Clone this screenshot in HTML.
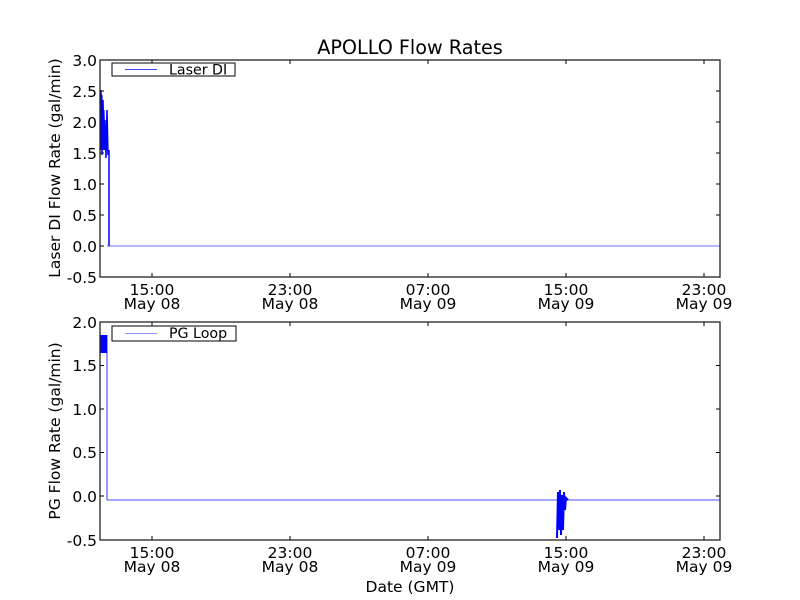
<!DOCTYPE html>
<html><head><meta charset="utf-8"><style>html,body{margin:0;padding:0;background:#fff}svg{display:block}text{font-family:"DejaVu Sans","Liberation Sans",sans-serif;fill:#000}</style></head><body>
<svg width="800" height="600" viewBox="0 0 800 600" xmlns="http://www.w3.org/2000/svg">
<rect width="800" height="600" fill="#fff"/>
<text x="410" y="54" font-size="19.2" text-anchor="middle">APOLLO Flow Rates</text>
<g stroke="#000" stroke-width="1" fill="none">
<path d="M152 60v4M290 60v4M428 60v4M566 60v4M704 60v4M152 277v-4M290 277v-4M428 277v-4M566 277v-4M704 277v-4"/>
<path d="M100 91h4M100 122h4M100 153h4M100 184h4M100 215h4M100 246h4M720 91h-4M720 122h-4M720 153h-4M720 184h-4M720 215h-4M720 246h-4"/>
</g>
<path d="M107 246H720" stroke="#7070ff" stroke-width="1"/>
<path d="M101 90L102 155L103 100L104 150L105 120L106 158L107 110L108 155L109 150L109 246" stroke="#0000ff" stroke-width="1.5" fill="none"/>
<path d="M101 95L102 150L103 110L104 145L105 125L106 150" stroke="#0000ff" stroke-width="3" fill="none"/>
<rect x="100" y="60" width="620" height="217" fill="none" stroke="#222" stroke-width="1.3"/>
<rect x="112" y="63" width="123" height="13" fill="#fff" stroke="#000" stroke-width="1"/>
<line x1="125" y1="69.5" x2="157" y2="69.5" stroke="#4040ff"/>
<text x="169" y="74.5" font-size="14.2">Laser DI</text>
<g font-size="15.5" text-anchor="end">
<text x="97" y="66">3.0</text><text x="97" y="97">2.5</text><text x="97" y="128">2.0</text><text x="97" y="159">1.5</text><text x="97" y="190">1.0</text><text x="97" y="221">0.5</text><text x="97" y="252">0.0</text><text x="97" y="283">-0.5</text>
</g>
<g font-size="15.5" text-anchor="middle">
<text x="152" y="295">15:00</text><text x="152" y="309">May 08</text>
<text x="290" y="295">23:00</text><text x="290" y="309">May 08</text>
<text x="428" y="295">07:00</text><text x="428" y="309">May 09</text>
<text x="566" y="295">15:00</text><text x="566" y="309">May 09</text>
<text x="704" y="295">23:00</text><text x="704" y="309">May 09</text>
</g>
<text transform="translate(60,168) rotate(-90)" font-size="15.5" text-anchor="middle">Laser DI Flow Rate (gal/min)</text>
<g stroke="#000" stroke-width="1" fill="none">
<path d="M152 322v4M290 322v4M428 322v4M566 322v4M704 322v4M152 540v-4M290 540v-4M428 540v-4M566 540v-4M704 540v-4"/>
<path d="M100 365.5h4M100 409h4M100 452.5h4M100 496h4M720 365.5h-4M720 409h-4M720 452.5h-4M720 496h-4"/>
</g>
<path d="M107 500H720" stroke="#7070ff" stroke-width="1.2"/>
<path d="M107 335V500" stroke="#3030ff" stroke-width="1"/>
<rect x="100" y="335" width="7" height="18" fill="#0000ff"/>
<path d="M557 538L558 492L559 520L560 490L561 535L562 495L563 530L564 492L565 510L566 498L568 500" stroke="#0000ff" stroke-width="2" fill="none"/>
<rect x="557" y="495" width="6" height="35" fill="#0000ff"/>
<rect x="100" y="322" width="620" height="218" fill="none" stroke="#222" stroke-width="1.3"/>
<rect x="112" y="326" width="124" height="15" fill="#fff" stroke="#000" stroke-width="1"/>
<line x1="125" y1="333.5" x2="157" y2="333.5" stroke="#9090ff"/>
<text x="169" y="338" font-size="14.2">PG Loop</text>
<g font-size="15.5" text-anchor="end">
<text x="97" y="328">2.0</text><text x="97" y="371">1.5</text><text x="97" y="415">1.0</text><text x="97" y="458">0.5</text><text x="97" y="502">0.0</text><text x="97" y="546">-0.5</text>
</g>
<g font-size="15.5" text-anchor="middle">
<text x="152" y="558">15:00</text><text x="152" y="572">May 08</text>
<text x="290" y="558">23:00</text><text x="290" y="572">May 08</text>
<text x="428" y="558">07:00</text><text x="428" y="572">May 09</text>
<text x="566" y="558">15:00</text><text x="566" y="572">May 09</text>
<text x="704" y="558">23:00</text><text x="704" y="572">May 09</text>
</g>
<text x="410" y="592" font-size="15.5" text-anchor="middle">Date (GMT)</text>
<text transform="translate(60,431) rotate(-90)" font-size="15.5" text-anchor="middle">PG Flow Rate (gal/min)</text>
</svg>
</body></html>
